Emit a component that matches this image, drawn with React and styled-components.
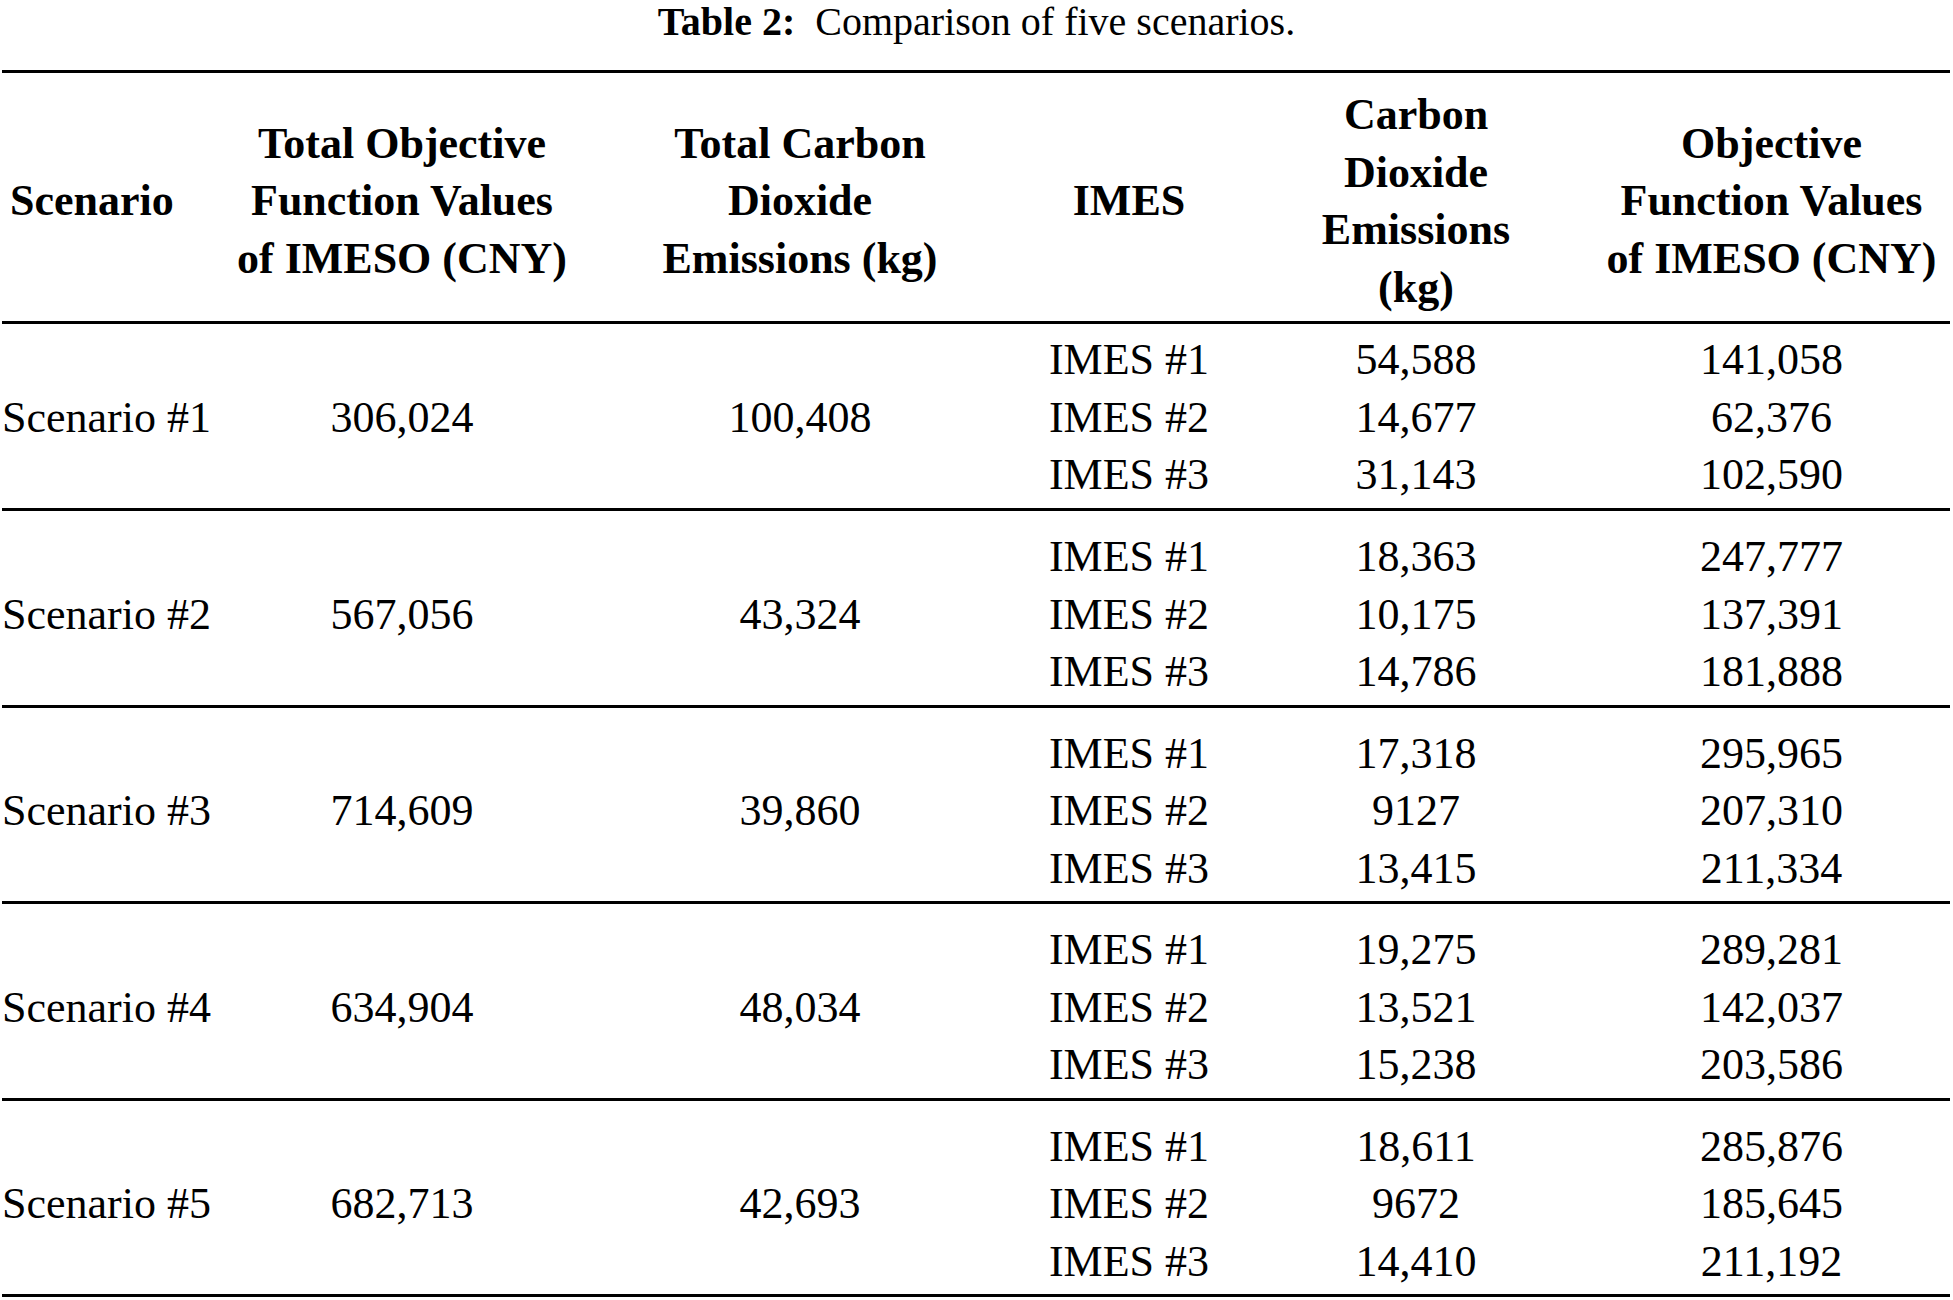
import React from "react";
import styled, { createGlobalStyle } from "styled-components";

const GlobalStyle = createGlobalStyle`
  body {
    margin: 0;
    background: #fff;
    color: #000;
    font-family: "Liberation Serif", "Times New Roman", serif;
  }
`;

const COLS = "221px 358px 438px 220px 354px 357px";

const Page = styled.div`
  width: 1953px;
`;

const Caption = styled.div`
  text-align: center;
  font-size: 40px;
  line-height: 44px;
  margin-bottom: 26px;

  b {
    font-weight: 700;
  }
`;

const Table = styled.div`
  margin: 0 3px 0 2px;
  border-top: 3px solid #000;
`;

const HeadRow = styled.div`
  display: grid;
  grid-template-columns: ${COLS};
  align-items: center;
  padding: 13px 0 5px;
  border-bottom: 3px solid #000;
  font-size: 44px;
  line-height: 57.5px;
  font-weight: 700;
`;

const Group = styled.div`
  display: grid;
  grid-template-columns: ${COLS};
  align-items: center;
  padding: ${(p) => (p.$first ? "7px 0 4.5px" : "17px 0 4px")};
  border-bottom: 3px solid #000;
  font-size: 44px;
  line-height: 57.5px;
`;

const Cell = styled.div`
  text-align: ${(p) => (p.$left ? "left" : "center")};
  padding-left: ${(p) => p.$pad || 0}px;
  white-space: nowrap;
`;

const Line = styled.div``;

const head = [
  ["Scenario"],
  ["Total Objective", "Function Values", "of IMESO (CNY)"],
  ["Total Carbon", "Dioxide", "Emissions (kg)"],
  ["IMES"],
  ["Carbon", "Dioxide", "Emissions", "(kg)"],
  ["Objective", "Function Values", "of IMESO (CNY)"],
];

const rows = [
  ["Scenario #1", "306,024", "100,408", ["54,588", "14,677", "31,143"], ["141,058", "62,376", "102,590"]],
  ["Scenario #2", "567,056", "43,324", ["18,363", "10,175", "14,786"], ["247,777", "137,391", "181,888"]],
  ["Scenario #3", "714,609", "39,860", ["17,318", "9127", "13,415"], ["295,965", "207,310", "211,334"]],
  ["Scenario #4", "634,904", "48,034", ["19,275", "13,521", "15,238"], ["289,281", "142,037", "203,586"]],
  ["Scenario #5", "682,713", "42,693", ["18,611", "9672", "14,410"], ["285,876", "185,645", "211,192"]],
];

const imes = ["IMES #1", "IMES #2", "IMES #3"];

export default function App() {
  return (
    <Page>
      <GlobalStyle />
      <Caption>
        <b>Table 2:</b>&nbsp; Comparison of five scenarios.
      </Caption>
      <Table>
        <HeadRow>
          {head.map((lines, i) => (
            <Cell key={i} $left={i === 0} $pad={i === 0 ? 8 : 0}>
              {lines.map((l) => (
                <Line key={l}>{l}</Line>
              ))}
            </Cell>
          ))}
        </HeadRow>
        {rows.map(([name, total, co2, em, obj], i) => (
          <Group key={name} $first={i === 0}>
            <Cell $left>{name}</Cell>
            <Cell>{total}</Cell>
            <Cell>{co2}</Cell>
            <Cell>
              {imes.map((m) => (
                <Line key={m}>{m}</Line>
              ))}
            </Cell>
            <Cell>
              {em.map((v, k) => (
                <Line key={k}>{v}</Line>
              ))}
            </Cell>
            <Cell>
              {obj.map((v, k) => (
                <Line key={k}>{v}</Line>
              ))}
            </Cell>
          </Group>
        ))}
      </Table>
    </Page>
  );
}
